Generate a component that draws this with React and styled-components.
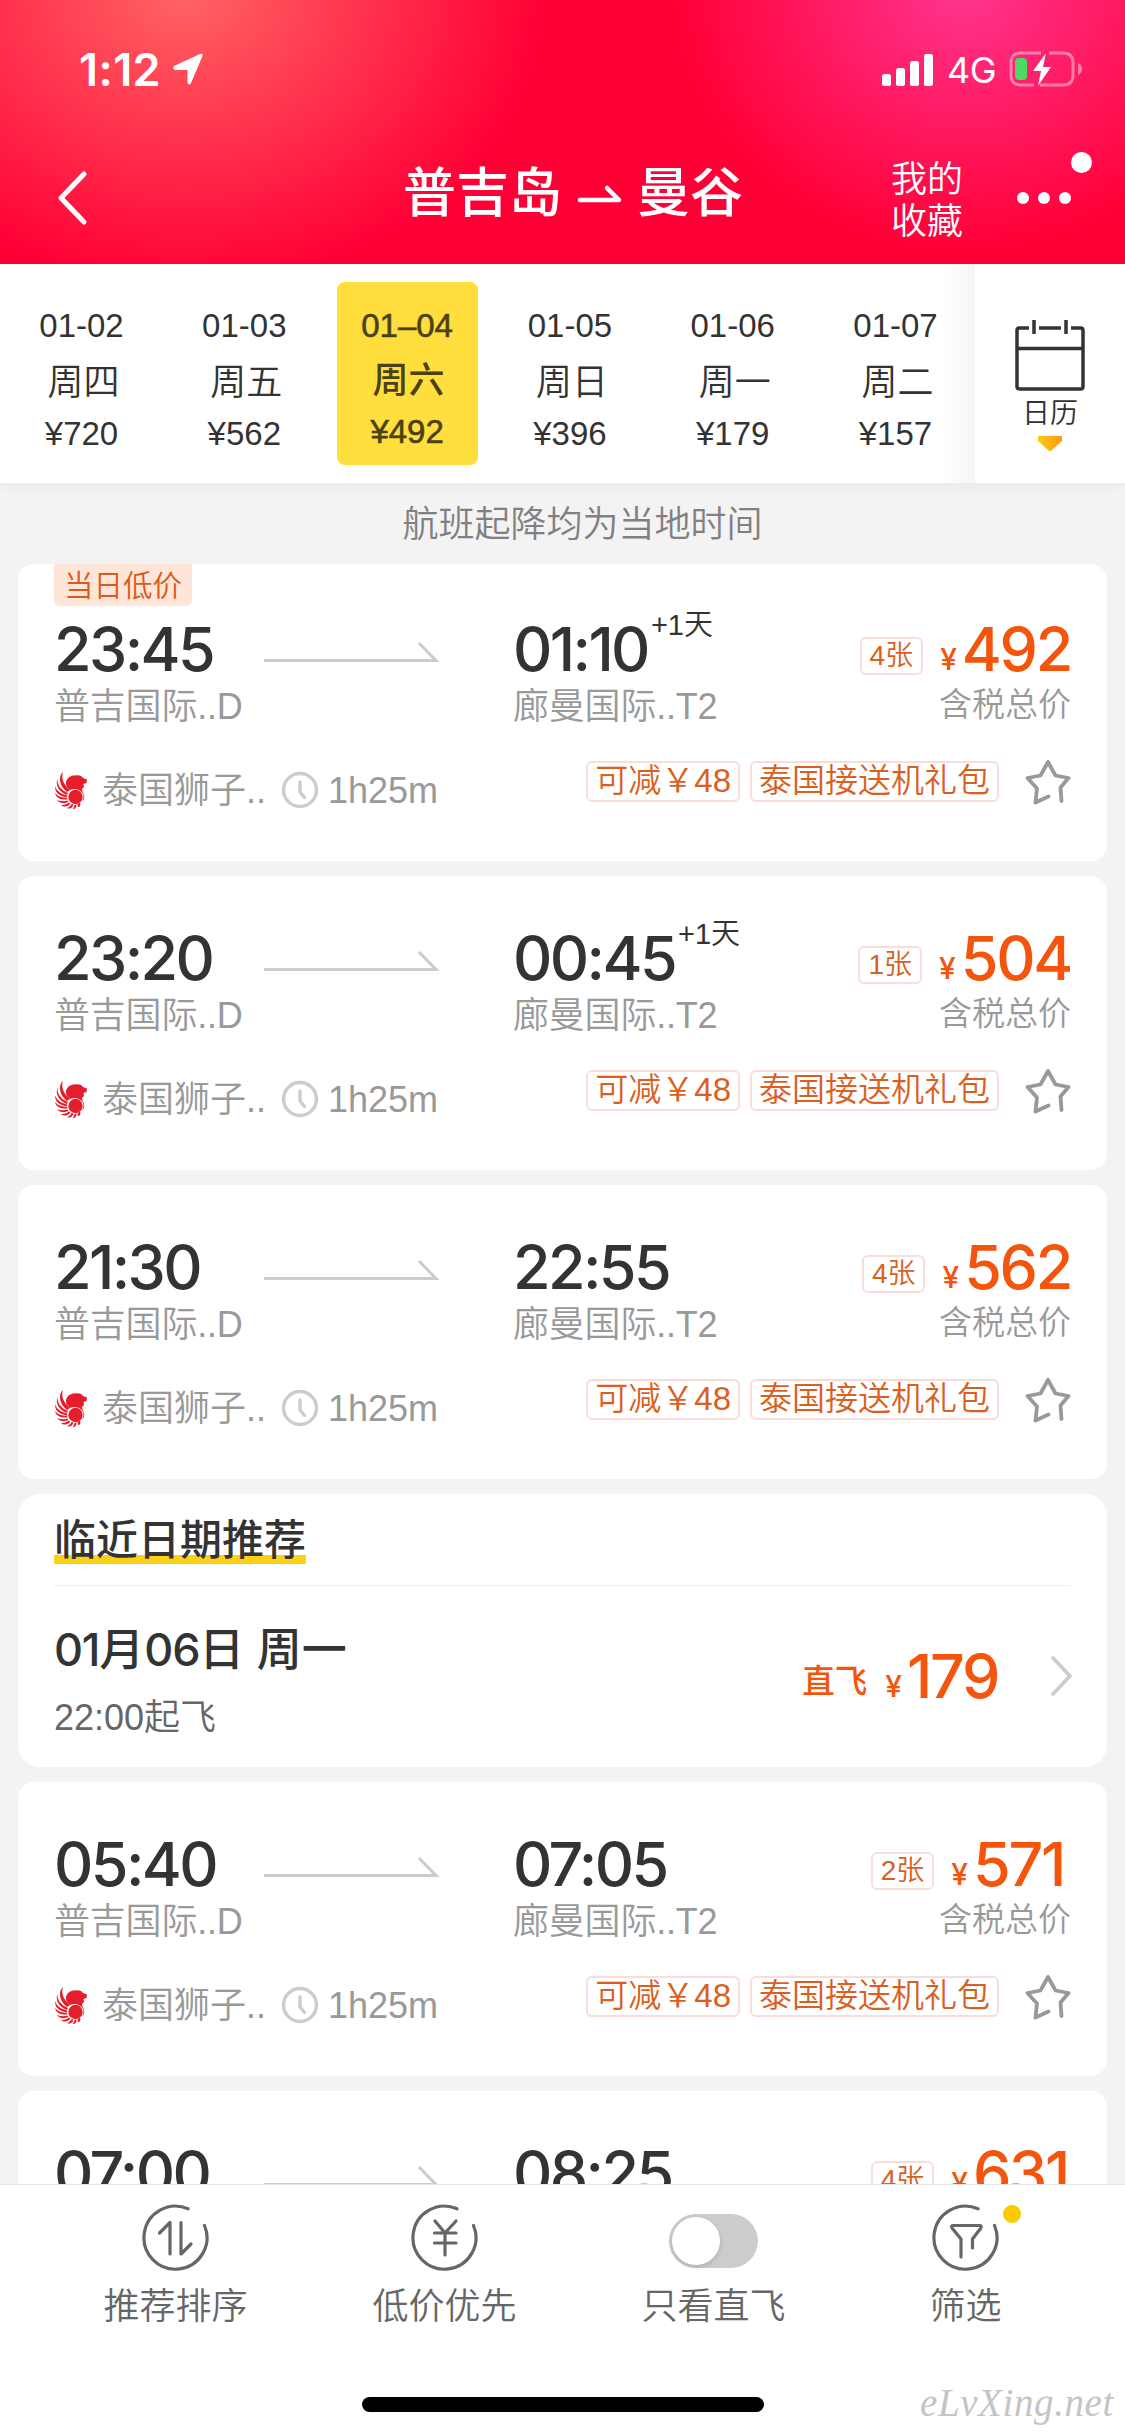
import React from 'react'
import styled, { createGlobalStyle } from 'styled-components'

const GlobalStyle = createGlobalStyle`
    * {
        box-sizing: border-box;
    }
    body {
        margin: 0;
        background-color: #f3f3f3;
        font-family: "Liberation Sans", "Noto Sans CJK SC", sans-serif;
        color: #333;
    }
`

const Page = styled.div`
    width: 1125px;
    height: 2436px;
    display: flex;
    flex-direction: column;
    overflow: hidden;
`

/* header */
const Header = styled.header`
    height: 264px;
    flex-shrink: 0;
    color: #fff;
    background:
        radial-gradient(ellipse 360px 290px at 185px -5px, #ff6464, rgba(255, 0, 54, 0)),
        radial-gradient(ellipse 290px 260px at 965px -10px, #ff3590, rgba(255, 0, 54, 0)),
        #ff0036;
`
const StatusBar = styled.div`
    height: 132px;
    display: flex;
    align-items: center;
    padding: 6px 42px 0 79px;
    font-family: Inter, sans-serif;
`
const Clock = styled.span`
    font-size: 45px;
    font-weight: 600;
    letter-spacing: 0.4px;
    margin-right: 11px;
`
const StatusRight = styled.div`
    display: flex;
    align-items: center;
    margin-left: auto;
`
const Network = styled.span`
    font-size: 36px;
    line-height: 44px;
    margin: 0 13px 0 13px;
    padding-top: 2px;
    letter-spacing: -0.6px;
`
const NavBar = styled.div`
    height: 132px;
    display: flex;
    align-items: center;
    padding-left: 56px;
`
const Title = styled.div`
    width: 340px;
    display: flex;
    align-items: center;
    justify-content: space-between;
    margin: -8px 147px 0 315px;
    font-size: 53px;
    font-weight: 500;
    line-height: 78px;
`
const Favorites = styled.div`
    width: 72px;
    margin: 6px 54px 0 1px;
    font-size: 36px;
    line-height: 42px;
    font-weight: 350;
`
const More = styled.div`
    position: relative;
    display: flex;
    gap: 9px;
`
const Dot = styled.i`
    width: 12px;
    height: 12px;
    border-radius: 50%;
    background-color: #fff;
`
const MoreBadge = styled.i`
    position: absolute;
    left: 54px;
    top: -40px;
    width: 21px;
    height: 21px;
    border-radius: 50%;
    background-color: #fff;
`

/* date strip */
const DateStrip = styled.div`
    position: relative;
    z-index: 1;
    height: 219px;
    flex-shrink: 0;
    display: flex;
    background-color: #fff;
    box-shadow: 0 2px 12px rgba(0, 0, 0, 0.05);
`
const Dates = styled.div`
    width: 975px;
    display: flex;
    padding-top: 18px;
    background: linear-gradient(to left, #f6f6f6, #fff 36px);
`
const DateItem = styled.div`
    width: 141px;
    height: 183px;
    margin-left: ${props => (props.$first ? '11px' : '21.8px')};
    padding-top: 25px;
    border-radius: 8px;
    display: flex;
    flex-direction: column;
    align-items: center;
    font-size: 33px;
    line-height: 38px;
    ${props => props.$active && `
        color: #4a4216;
        background-color: #ffde3e;
        -webkit-text-stroke: 0.6px #4a4216;
    `}
`
const Weekday = styled.span`
    font-size: 36px;
    line-height: 52px;
    margin: ${props => (props.$active ? '10px 0 6px 3px' : '12px 0 6px 4px')};
    font-weight: ${props => (props.$active ? 500 : 350)};
    -webkit-text-stroke: 0;
`
const CalendarButton = styled.div`
    flex: 1;
    display: flex;
    flex-direction: column;
    align-items: center;
    padding: 55px 0 0;
    font-size: 28px;
    line-height: 42px;
    font-weight: 350;
    background-color: #fff;

    span {
        margin: 2px 0 1px;
    }
`

/* list */
const List = styled.main`
    flex: 1;
    min-height: 0;
    overflow: hidden;
    padding: 0 18px;
`
const Notice = styled.div`
    height: 81px;
    padding-left: 40px;
    text-align: center;
    font-size: 36px;
    font-weight: 350;
    line-height: 83px;
    color: #808080;
`
const Card = styled.section`
    position: relative;
    height: ${props => props.$height || 294}px;
    margin-bottom: 15px;
    padding: ${props => (props.$low ? 55 : 52)}px 36px 0;
    border-radius: ${props => props.$radius || 16}px;
    background-color: #fff;
`
const LowBadge = styled.div`
    position: absolute;
    left: 36px;
    top: 0;
    width: 138px;
    height: 42px;
    text-align: center;
    font-size: 29.5px;
    font-weight: 350;
    line-height: 44px;
    color: #d95b1c;
    background-color: #ffe5d8;
    border-radius: 0 0 6px 6px;
`
const Trip = styled.div`
    display: flex;
    height: 116px;
`
const Stop = styled.div`
    width: ${props => props.$width}px;
`
const Time = styled.div`
    height: 60px;
    display: flex;
    font-family: Inter, sans-serif;
    font-size: 61px;
    line-height: 60px;
    font-weight: 500;
    letter-spacing: -2.6px;
`
const NextDay = styled.span`
    margin: -19px 0 0 3px;
    font-family: "Liberation Sans", "Noto Sans CJK SC", sans-serif;
    font-size: 29px;
    line-height: 50px;
    font-weight: 350;
    letter-spacing: 0;
`
const Airport = styled.div`
    font-size: 36px;
    line-height: 52px;
    margin-top: 2px;
    font-weight: 350;
    letter-spacing: -0.2px;
    color: #999;
`
const LongArrow = styled.svg`
    width: 249px;
    height: 24px;
    margin-top: 21px;
    flex-shrink: 0;
`
const Fare = styled.div`
    margin-left: auto;
    text-align: right;
`
const FareLine = styled.div`
    height: 60px;
    display: flex;
    align-items: flex-start;
    justify-content: flex-end;
    color: #f5540c;
`
const Tickets = styled.span`
    height: 38px;
    margin: 18px 17px 0 0;
    padding: 0 8px;
    border: 2px solid #fadcd8;
    border-radius: 6px;
    font-size: 28px;
    font-weight: 350;
    line-height: 34px;
    color: #d9601f;
`
const Yen = styled.span`
    font-family: Inter, sans-serif;
    font-size: 30px;
    line-height: 30px;
    font-weight: 500;
    margin: 25px 5px 0 0;
`
const Amount = styled.span`
    min-width: 98px;
    text-align: left;
    font-family: Inter, sans-serif;
    font-size: 61px;
    line-height: 60px;
    font-weight: 500;
    letter-spacing: -2.3px;
`
const Tax = styled.div`
    font-size: 33px;
    font-weight: 350;
    line-height: 48px;
    margin-top: 2px;
    color: #999;
`
const Detail = styled.div`
    display: flex;
    height: 60px;
    margin-top: 20px;
`
const Airline = styled.div`
    display: flex;
    align-items: center;
    height: 50px;
    margin-top: 10px;
    font-size: 36px;
    font-weight: 350;
    line-height: 52px;
    color: #999;
`
const AirlineName = styled.span`
    width: 170px;
    margin: 2px 9px 0 12px;
    white-space: nowrap;
`
const Duration = styled.span`
    margin: 1px 0 0 9px;
`
const Perks = styled.div`
    display: flex;
    align-items: center;
    gap: 10px;
    height: 42px;
    margin: 5px 0 0 auto;
`
const Perk = styled.span`
    height: 41px;
    padding: 0 7px;
    border: 2px solid #fadcd8;
    border-radius: 6px;
    font-size: 33px;
    font-weight: 350;
    line-height: 36px;
    white-space: nowrap;
    color: #d9601f;
`
const Star = styled.svg`
    width: 46px;
    height: 46px;
    margin: 2px 0 0 16px;
`

/* nearby date card */
const NearbyTitle = styled.h2`
    width: 252px;
    height: 50px;
    margin: -31px 0 20px;
    font-size: 42px;
    line-height: 51px;
    font-weight: 500;
    background: linear-gradient(#fbd015, #fbd015) 0 40px / 252px 9px no-repeat;
`
const NearbyBody = styled.div`
    display: flex;
    height: 180px;
    border-top: 1px solid #eee;
`
const NearbyDate = styled.div`
    flex: 1;
    padding-top: 36px;
    font-size: 45px;
    font-weight: 500;
    line-height: 56px;

    p {
        margin: 12px 0 0;
        font-size: 36px;
        font-weight: 350;
        line-height: 53px;
        color: #666;
    }
`
const NearbyDigits = styled.span`
    font-family: Inter, sans-serif;
    letter-spacing: -1.2px;
`
const NearbyPrice = styled.div`
    display: flex;
    padding-top: 60px;
    color: #f5540c;
`
const Direct = styled.span`
    font-size: 32.5px;
    line-height: 40px;
    font-weight: 500;
    margin: 16px 18px 0 0;
`
const NearbyArrow = styled.svg`
    width: 24px;
    height: 44px;
    margin: 68px -3px 0 45px;
`

/* bottom bar */
const TabBar = styled.footer`
    height: 252px;
    flex-shrink: 0;
    background-color: #fff;
    border-top: 1px solid #e6e6e6;
`
const Tabs = styled.div`
    display: flex;
    height: 212px;
    padding: 19px 0 0 41px;
`
const Tab = styled.div`
    position: relative;
    width: ${props => props.$width || 269}px;
    display: flex;
    flex-direction: column;
    align-items: center;
    gap: 9px;
    font-size: 36px;
    font-weight: 350;
    line-height: 52px;
    color: #666;
`
const TabIcon = styled.svg`
    width: 68px;
    height: 68px;
`
const Switch = styled.div`
    width: 89px;
    height: 54px;
    margin: 10px 1px 4px 0;
    padding: 3px;
    border-radius: 27px;
    background-color: #ccc;
`
const Knob = styled.div`
    width: 48px;
    height: 48px;
    border-radius: 50%;
    background-color: #fff;
    box-shadow: 0 2px 5px rgba(0, 0, 0, 0.15);
`
const FilterDot = styled.i`
    position: absolute;
    left: 155px;
    top: 1px;
    width: 18px;
    height: 18px;
    border-radius: 50%;
    background-color: #fcc900;
`
const HomeIndicator = styled.div`
    width: 402px;
    height: 15px;
    margin-left: 362px;
    border-radius: 8px;
    background-color: #000;
`
const Watermark = styled.div`
    position: absolute;
    left: 920px;
    top: 2379px;
    font-family: "Liberation Serif", serif;
    font-style: italic;
    font-size: 39px;
    line-height: 48px;
    letter-spacing: 0.6px;
    color: #c4c4c4;
`

const dates = [
    { date: '01-02', day: '周四', price: '¥720' },
    { date: '01-03', day: '周五', price: '¥562' },
    { date: '01–04', day: '周六', price: '¥492', active: true },
    { date: '01-05', day: '周日', price: '¥396' },
    { date: '01-06', day: '周一', price: '¥179' },
    { date: '01-07', day: '周二', price: '¥157' },
]

const flights = [
    { from: '23:45', to: '01:10', nextDay: true, left: 4, price: 492, low: true },
    { from: '23:20', to: '00:45', nextDay: true, left: 1, price: 504 },
    { from: '21:30', to: '22:55', left: 4, price: 562 },
]

const laterFlights = [
    { from: '05:40', to: '07:05', left: 2, price: 571 },
    { from: '07:00', to: '08:25', left: 4, price: 631 },
]

function LionLogo() {
    return (
        <svg width="36" height="40" viewBox="-1 -2 36 40">
            {/* wing feathers fanned round the body */}
            <g fill="#e61e2b">
                <path d="M8 0C6 6 8 12 15 18L12 20C4 14 3 4 8 0z" />
                <path d="M2.500 7C2 13 6 18 13 21L12 23C4 20 0 13 2.500 7z" />
                <path d="M.5 14C1 19 6 22 12 23.500V25.500C4 24 -1 20 .5 14z" />
                <path d="M0 21C3 24.500 7 25.500 12 26L12.500 27.500C6 28 1 26 0 21z" />
                <path d="M2 28C6 29.500 9 29.500 12.500 28.500L13.500 30C9 32 5 31.500 2 28z" />
                <path d="M6 33C9 33.500 12 32 14 30.500L15.500 31.500C13 35 9 35.500 6 33z" />
                <path d="M12 36C14 35.500 15.500 34 16.500 32L18.500 32.500C17.500 36 15 37.500 12 36z" />
                <path d="M18 37L19.500 33L21.500 32.500C21.500 35.500 20 37.500 18 37z" />
                <path d="M23 35L22.500 32L25 30.500C26 33 25 35 23 35z" />
                {/* head and mane */}
                <path d="M11 10C12 5 17 3 20 3.500C24 2.500 27 4 28 6L32 7.500L31.500 11L28.500 12L29 15L27 17L28 22C25 17 20 16 15 18C12 16 10.500 13 11 10z" />
                <circle cx="20.500" cy="25" r="7.200" />
                <path d="M27 19C30 22 30 27 27 30C28.500 28 29.500 22 27 19z" />
            </g>
        </svg>
    )
}

function Flight({ from, to, nextDay, left, price, low }) {
    return (
        <Card $low={low} $height={low ? 297 : 294}>
            {low && <LowBadge>当日低价</LowBadge>}
            <Trip>
                <Stop $width={210}>
                    <Time>{from}</Time>
                    <Airport>普吉国际..D</Airport>
                </Stop>
                <LongArrow viewBox="0 0 249 24" fill="none" stroke="#ccc" strokeWidth="3">
                    <path d="M0 20.500H172L155 3" />
                </LongArrow>
                <Stop $width={270}>
                    <Time>
                        {to}
                        {nextDay && <NextDay>+1天</NextDay>}
                    </Time>
                    <Airport>廊曼国际..T2</Airport>
                </Stop>
                <Fare>
                    <FareLine>
                        <Tickets>{left}张</Tickets>
                        <Yen>¥</Yen>
                        <Amount>{price}</Amount>
                    </FareLine>
                    <Tax>含税总价</Tax>
                </Fare>
            </Trip>
            <Detail>
                <Airline>
                    <LionLogo />
                    <AirlineName>泰国狮子..</AirlineName>
                    <svg width="38" height="38" viewBox="0 0 38 38" fill="none" stroke="#ccc" strokeWidth="3.400" strokeLinecap="round">
                        <circle cx="19" cy="19" r="16.500" />
                        <path d="M19 11v10l4.500 5.500" />
                    </svg>
                    <Duration>1h25m</Duration>
                </Airline>
                <Perks>
                    <Perk>可减￥48</Perk>
                    <Perk>泰国接送机礼包</Perk>
                    <Star viewBox="0 0 46 46" fill="none" stroke="#999" strokeWidth="3.800" strokeLinecap="round" strokeLinejoin="round">
                        <path d="M36.500 42L35.500 28.500L43.500 19L30.500 16.500L23 3L15.500 16.500L2.500 19L12 29.500L10.500 43.500L23.500 37.500" />
                    </Star>
                </Perks>
            </Detail>
        </Card>
    )
}

function Ring({ children }) {
    return (
        <TabIcon viewBox="0 0 68 68" fill="none" stroke="#666" strokeWidth="3.200" strokeLinecap="round" strokeLinejoin="round">
            <path d="M46 4.800A31.500 31.500 0 1 0 62.500 21.500" />
            {children}
        </TabIcon>
    )
}

function App() {
    return (
        <Page>
            <GlobalStyle />
            <Header>
                <StatusBar>
                    <Clock>1:12</Clock>
                    <svg width="32" height="32" viewBox="0 0 32 32" fill="#fff">
                        <path d="M2 13L28 1q3-1 2.500 2L19 30q-2 3-3.500 0V17H3q-3-1-1-4z" />
                    </svg>
                    <StatusRight>
                        <svg width="52" height="33" viewBox="0 0 52 33" fill="#fff">
                            <rect x="0" y="21" width="9" height="12" rx="2.500" />
                            <rect x="14" y="15" width="9" height="18" rx="2.500" />
                            <rect x="28" y="8" width="9" height="25" rx="2.500" />
                            <rect x="42" y="1" width="9" height="32" rx="2.500" />
                        </svg>
                        <Network>4G</Network>
                        <svg width="74" height="36" viewBox="0 0 74 36">
                            <path d="M32 2H12Q2 2 2 12v12q0 10 10 10h13M40 2h14q10 0 10 10v12q0 10-10 10H31" fill="none" stroke="#fff" strokeOpacity=".42" strokeWidth="3" />
                            <path d="M69 12q4 2 4 6t-4 6z" fill="#fff" fillOpacity=".45" />
                            <rect x="6" y="7" width="12" height="22" rx="4" fill="#4cd964" />
                            <path d="M37 2L24 20h8l-3 15 13-19h-8z" fill="#fff" />
                        </svg>
                    </StatusRight>
                </StatusBar>
                <NavBar>
                    <svg width="32" height="56" viewBox="0 0 32 56" fill="none" stroke="#fff" strokeWidth="5" strokeLinecap="round" strokeLinejoin="round">
                        <path d="M28 4L5 28L28 52" />
                    </svg>
                    <Title>
                        <span>普吉岛</span>
                        <svg width="46" height="20" viewBox="0 0 46 20" fill="none" stroke="#fff" strokeWidth="4.500" strokeLinecap="round" strokeLinejoin="round">
                            <path d="M3 16H42L30 4" />
                        </svg>
                        <span>曼谷</span>
                    </Title>
                    <Favorites>我的<br />收藏</Favorites>
                    <More>
                        <Dot />
                        <Dot />
                        <Dot />
                        <MoreBadge />
                    </More>
                </NavBar>
            </Header>

            <DateStrip>
                <Dates>
                    {dates.map((d, i) => (
                        <DateItem key={d.date} $first={i === 0} $active={d.active}>
                            <span>{d.date}</span>
                            <Weekday $active={d.active}>{d.day}</Weekday>
                            <span>{d.price}</span>
                        </DateItem>
                    ))}
                </Dates>
                <CalendarButton>
                    <svg width="70" height="72" viewBox="0 0 70 72" fill="none" stroke="#333" strokeWidth="3.500">
                        <path d="M14 9H4.500Q2 9 2 11.500V67.500Q2 70 4.500 70H65.500Q68 70 68 67.500V11.500Q68 9 65.500 9H56M24 9H46M2 29.500H68M19 1V15M51 1V15" />
                    </svg>
                    <span>日历</span>
                    <svg width="24" height="15" viewBox="0 0 24 15">
                        <defs>
                            <linearGradient id="caret">
                                <stop offset="0" stopColor="#fdc81c" />
                                <stop offset="1" stopColor="#ff9a0a" />
                            </linearGradient>
                        </defs>
                        <path d="M0 0H24V5L14 14Q12 16 10 14L0 5z" fill="url(#caret)" />
                    </svg>
                </CalendarButton>
            </DateStrip>

            <List>
                <Notice>航班起降均为当地时间</Notice>
                {flights.map(f => <Flight key={f.from} {...f} />)}
                <Card $height={273} $radius={22}>
                    <NearbyTitle>临近日期推荐</NearbyTitle>
                    <NearbyBody>
                        <NearbyDate>
                            <NearbyDigits>01</NearbyDigits>月<NearbyDigits>06</NearbyDigits>日 周一
                            <p>22:00起飞</p>
                        </NearbyDate>
                        <NearbyPrice>
                            <Direct>直飞</Direct>
                            <Yen>¥</Yen>
                            <Amount>179</Amount>
                        </NearbyPrice>
                        <NearbyArrow viewBox="0 0 24 44" fill="none" stroke="#ccc" strokeWidth="3.800" strokeLinecap="round" strokeLinejoin="round">
                            <path d="M3 4L20 22L3 40" />
                        </NearbyArrow>
                    </NearbyBody>
                </Card>
                {laterFlights.map(f => <Flight key={f.from} {...f} />)}
            </List>

            <TabBar>
                <Tabs>
                    <Tab>
                        <Ring>
                            <path d="M17.500 29L28 18.500V50M39 18.500V50L49 40" />
                        </Ring>
                        <span>推荐排序</span>
                    </Tab>
                    <Tab>
                        <Ring>
                            <path d="M24 17L34 29L45 17M34 29V51M23.500 29H45M23.500 39H45" />
                        </Ring>
                        <span>低价优先</span>
                    </Tab>
                    <Tab>
                        <Switch>
                            <Knob />
                        </Switch>
                        <span>只看直飞</span>
                    </Tab>
                    <Tab $width={235}>
                        <Ring>
                            <path d="M29 53V35L20 24Q18.500 21.500 21.500 21.500H48Q50 21.500 48.500 24.500L40.500 35V44" />
                        </Ring>
                        <span>筛选</span>
                        <FilterDot />
                    </Tab>
                </Tabs>
                <HomeIndicator />
            </TabBar>
            <Watermark>eLvXing.net</Watermark>
        </Page>
    )
}

export default App
